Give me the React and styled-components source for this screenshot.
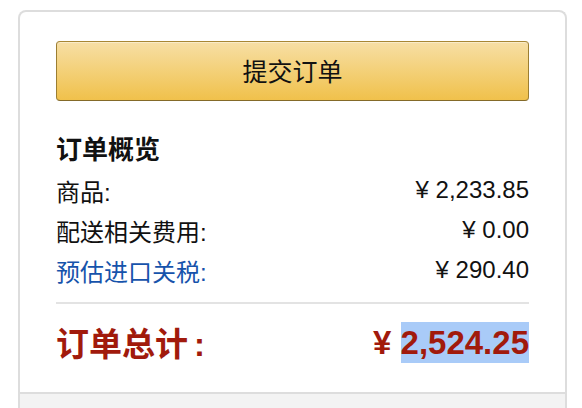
import styled, { createGlobalStyle } from "styled-components"

const GlobalStyle = createGlobalStyle`
  html, body {
    margin: 0;
    padding: 0;
    background: #ffffff;
    overflow: hidden;
  }
  body {
    font-family: "Liberation Sans", "Noto Sans CJK SC", sans-serif;
    color: #111111;
  }
`

const Page = styled.div`
  padding: 10px 15px 0 18px;
`

const Card = styled.div`
  width: 549px;
  box-sizing: border-box;
  border: 2px solid #dddddd;
  border-bottom: none;
  border-radius: 8px 8px 0 0;
  overflow: hidden;
`

const Body = styled.div`
  padding: 29px 36px 28px;
`

const SubmitButton = styled.button`
  display: flex;
  align-items: center;
  justify-content: center;
  width: 100%;
  height: 60px;
  box-sizing: border-box;
  border: 1px solid;
  border-color: #a88734 #9c7e31 #846a29;
  border-radius: 4px;
  background: linear-gradient(to bottom, #f7dfa5, #f0c14b);
  box-shadow: inset 0 1px 0 rgba(255, 255, 255, 0.4);
  font-family: "Liberation Sans", "Noto Sans CJK SC", sans-serif;
  font-size: 25px;
  color: #111111;
  padding: 0 0 2px;
  cursor: pointer;
`

const Heading = styled.h3`
  margin: 34px 0 5px;
  font-size: 26px;
  line-height: 30px;
  font-weight: 700;
  color: #111111;
`

const Row = styled.div`
  display: flex;
  justify-content: space-between;
  align-items: center;
  height: 40px;
  font-size: 24px;
  color: ${(p) => (p.$link ? "#1653ab" : "#111111")};
`

const Amount = styled.span`
  color: #111111;
`

const Divider = styled.div`
  height: 2px;
  background: #e3e3e3;
  margin-top: 12px;
`

const TotalRow = styled.div`
  display: flex;
  justify-content: space-between;
  align-items: center;
  height: 44px;
  margin-top: 16px;
  font-size: 33px;
  font-weight: 700;
  color: #a11a0c;
`

const Colon = styled.span`
  margin-left: 6px;
`

const Selected = styled.span`
  display: inline-block;
  height: 41px;
  line-height: 41px;
  background: #a9cbf8;
  font-size: 33px;
`

const Footer = styled.div`
  height: 120px;
  border-top: 2px solid #dddddd;
  background: #f3f3f3;
`

const rows = [
  { label: "商品:", value: "2,233.85" },
  { label: "配送相关费用:", value: "0.00" },
  { label: "预估进口关税:", value: "290.40", link: true },
]

export default function App() {
  return (
    <>
      <GlobalStyle />
      <Page>
        <Card>
          <Body>
            <SubmitButton>提交订单</SubmitButton>
            <Heading>订单概览</Heading>
            {rows.map((r) => (
              <Row key={r.label} $link={r.link}>
                <span>{r.label}</span>
                <Amount>¥ {r.value}</Amount>
              </Row>
            ))}
            <Divider />
            <TotalRow>
              <span>
                订单总计<Colon>:</Colon>
              </span>
              <span>
                ¥ <Selected>2,524.25</Selected>
              </span>
            </TotalRow>
          </Body>
          <Footer />
        </Card>
      </Page>
    </>
  )
}
